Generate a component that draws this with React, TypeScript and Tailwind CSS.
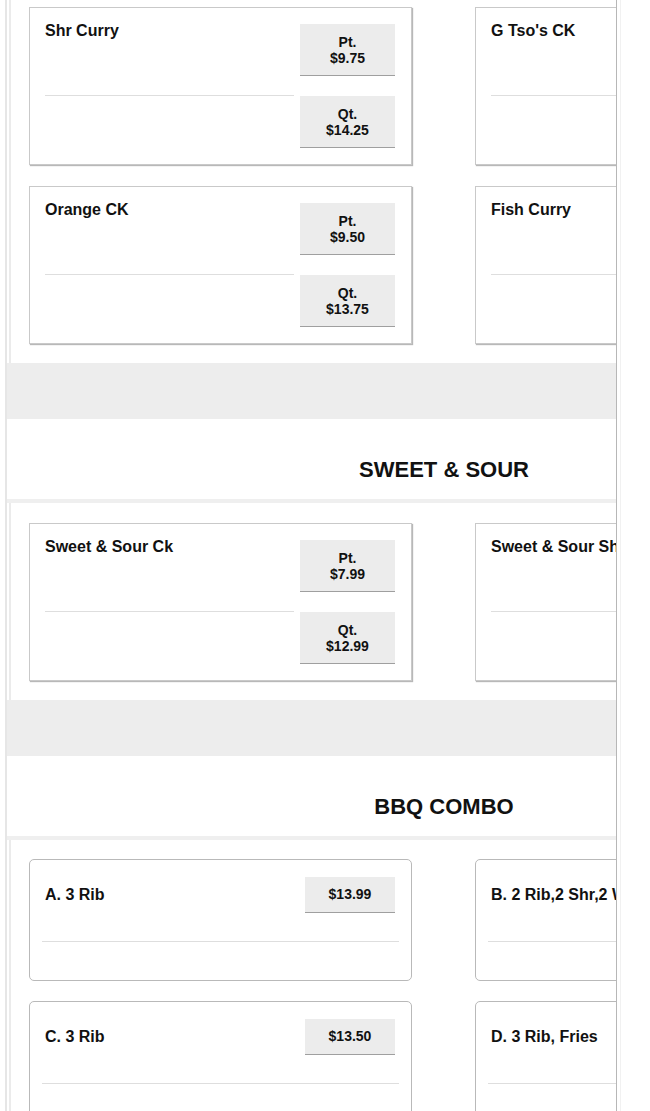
import React from 'react';

type Item = { name: string; prices: { label?: string; price: string }[] };

const curry: Item[][] = [
  [
    { name: 'Shr Curry', prices: [{ label: 'Pt.', price: '$9.75' }, { label: 'Qt.', price: '$14.25' }] },
    { name: "G Tso's CK", prices: [{ label: 'Pt.', price: '$9.75' }, { label: 'Qt.', price: '$14.25' }] },
  ],
  [
    { name: 'Orange CK', prices: [{ label: 'Pt.', price: '$9.50' }, { label: 'Qt.', price: '$13.75' }] },
    { name: 'Fish Curry', prices: [{ label: 'Pt.', price: '$9.50' }, { label: 'Qt.', price: '$13.75' }] },
  ],
];

const sweetSour: Item[][] = [
  [
    { name: 'Sweet & Sour Ck', prices: [{ label: 'Pt.', price: '$7.99' }, { label: 'Qt.', price: '$12.99' }] },
    { name: 'Sweet & Sour Shr', prices: [{ label: 'Pt.', price: '$8.99' }, { label: 'Qt.', price: '$13.99' }] },
  ],
];

const combos: Item[][] = [
  [
    { name: 'A. 3 Rib', prices: [{ price: '$13.99' }] },
    { name: 'B. 2 Rib,2 Shr,2 Wings', prices: [{ price: '$14.99' }] },
  ],
  [
    { name: 'C. 3 Rib', prices: [{ price: '$13.50' }] },
    { name: 'D. 3 Rib, Fries', prices: [{ price: '$13.99' }] },
  ],
];

function PriceButton({ label, price }: { label?: string; price: string }) {
  return (
    <div className="h-[52px] w-[95px] bg-[#ececec] border-b border-[#9f9f9f] flex flex-col items-center justify-center text-[14px] leading-[16px] font-bold text-[#111]">
      <span>{label}</span>
      <span>{price}</span>
    </div>
  );
}

function SizeCard({ item }: { item: Item }) {
  return (
    <div className="w-[383px] h-[158px] bg-white border border-[#c9c9c9] shadow-[1px_1px_1px_rgba(0,0,0,0.28)] pt-[16px] pb-[16px] pl-[15px] pr-[16px]">
      <div className="grid grid-cols-[249px_95px] gap-x-[6px]">
        <div className="h-[72px] border-b border-[#dedede] text-[16px] leading-[13px] font-bold text-[#111]">{item.name}</div>
        <div className="h-[72px]">
          <PriceButton label={item.prices[0].label} price={item.prices[0].price} />
        </div>
        <div />
        <div>
          <PriceButton label={item.prices[1].label} price={item.prices[1].price} />
        </div>
      </div>
    </div>
  );
}

function ComboCard({ item }: { item: Item }) {
  return (
    <div className="w-[383px] h-[122px] bg-white border border-[#b9b9b9] rounded-[5px] pt-[17px] px-[12px]">
      <div className="h-[36px] flex items-center justify-between pl-[3px] pr-[4px]">
        <span className="text-[16px] font-bold text-[#111] whitespace-nowrap">{item.name}</span>
        <div className="h-[36px] w-[90px] shrink-0 bg-[#ececec] border-b border-[#9f9f9f] flex items-center justify-center text-[14px] font-bold text-[#111]">
          {item.prices[0].price}
        </div>
      </div>
      <div className="mt-[28px] border-t border-[#dedede]" />
    </div>
  );
}

function Panel({ rows, combo, top }: { rows: Item[][]; combo?: boolean; top?: boolean }) {
  return (
    <div className={top ? '' : 'border-t-[4px] border-[#efefef]'}>
      <div
        className={`ml-[2px] border-l-[2px] border-[#ebebeb] pl-[18px] pb-[19px] flex flex-col ${combo ? 'gap-[20px] pt-[19px]' : 'gap-[21px]'} ${top ? 'pt-[7px]' : combo ? '' : 'pt-[20px]'}`}
      >
        {rows.map((row, i) => (
          <div key={i} className="flex gap-x-[63px]">
            {row.map((item) => (combo ? <ComboCard key={item.name} item={item} /> : <SizeCard key={item.name} item={item} />))}
          </div>
        ))}
      </div>
    </div>
  );
}

function Header({ title }: { title: string }) {
  return (
    <>
      <div className="h-[56px] bg-[#ededed]" />
      <div className="h-[80px] pt-[39px] text-center text-[22px] leading-[24px] font-bold text-[#111]">{title}</div>
    </>
  );
}

export default function App() {
  return (
    <div className="h-[1111px] bg-white overflow-hidden" style={{ fontFamily: '"Liberation Sans", Arial, sans-serif' }}>
      <div className="w-[621px] h-full border-r border-[#f1f1f1]">
        <div className="ml-[5px] w-[612px] h-full border-l-[2px] border-[#e6e6e6] border-r border-r-[#b7b7b7] overflow-hidden">
          <div className="w-[874px]">
            <Panel rows={curry} top />
            <Header title="SWEET & SOUR" />
            <Panel rows={sweetSour} />
            <Header title="BBQ COMBO" />
            <Panel rows={combos} combo />
          </div>
        </div>
      </div>
    </div>
  );
}
